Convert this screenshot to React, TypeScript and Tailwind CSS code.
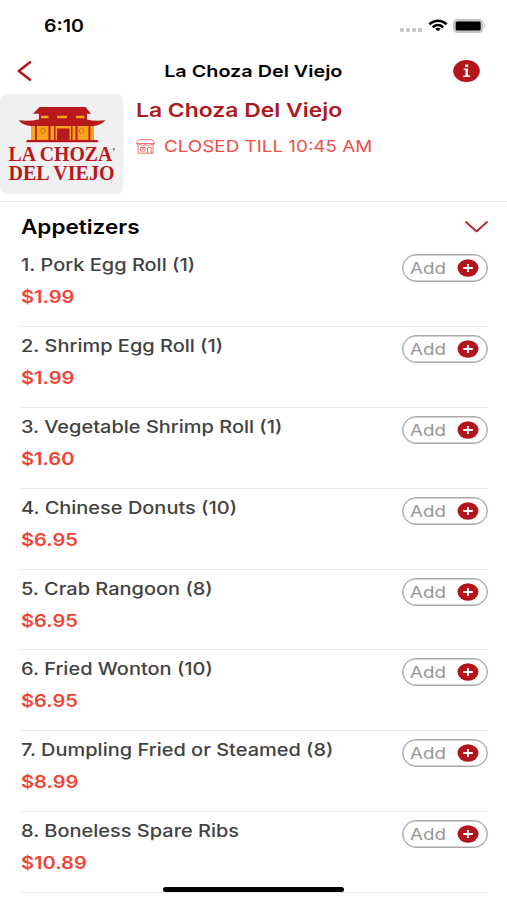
const items = [
  { id: 1, name: "Pork Egg Roll (1)", price: "$1.99" },
  { id: 2, name: "Shrimp Egg Roll (1)", price: "$1.99" },
  { id: 3, name: "Vegetable Shrimp Roll (1)", price: "$1.60" },
  { id: 4, name: "Chinese Donuts (10)", price: "$6.95" },
  { id: 5, name: "Crab Rangoon (8)", price: "$6.95" },
  { id: 6, name: "Fried Wonton (10)", price: "$6.95" },
  { id: 7, name: "Dumpling Fried or Steamed (8)", price: "$8.99" },
  { id: 8, name: "Boneless Spare Ribs", price: "$10.89" },
];

function StatusBar() {
  return (
    <div className="h-[50px] pl-[44px] pr-[20px] pt-[14px] flex justify-between items-start">
      <span className="text-[17px] leading-6 font-semibold origin-left scale-x-[1.15] whitespace-nowrap">
        6:10
      </span>

      <svg width="88" height="24" viewBox="0 0 88 24">
        <g fill="#c9c9c9">
          <rect x="1" y="14" width="4" height="4" rx="1" />
          <rect x="7" y="14" width="4" height="4" rx="1" />
          <rect x="13" y="14" width="4" height="4" rx="1" />
          <rect x="19" y="14" width="4" height="4" rx="1" />
        </g>
        <g transform="translate(29.5 5.5)" fill="none" stroke="#000" strokeWidth="2.5">
          <path d="M.8 4.7Q9.5 -2.2 18.2 4.7" />
          <path d="M4.2 7.7Q9.5 3.4 14.8 7.7" />
          <path d="M6.8 9.2Q9.5 7.4 12.2 9.2L9.5 11.8Z" fill="#000" stroke="none" />
        </g>
        <rect x="54.9" y="5.9" width="28.6" height="12.2" rx="3.6" fill="#ccc" stroke="#c4c4c4" strokeWidth="1.8" />
        <rect x="56.7" y="7.4" width="25" height="9.2" rx="1.5" />
        <path d="M85.3 9.8Q87.6 12 85.3 14.2Z" fill="#bdbdbd" />
      </svg>
    </div>
  );
}

function NavBar() {
  return (
    <div className="h-[44px] pl-[17px] pr-[27px] pb-[2px] flex justify-between items-center">
      <svg width="15" height="20" viewBox="0 0 15 20" fill="none" stroke="#b8141b" strokeWidth="2.5" strokeLinecap="round" strokeLinejoin="round">
        <path d="M13 1.2L1.8 10L13 18.8" />
      </svg>

      <h1 className="text-[16.5px] leading-6 font-semibold scale-x-[1.2] whitespace-nowrap ml-[22px]">
        La Choza Del Viejo
      </h1>

      <svg width="27" height="22" viewBox="0 0 27 22">
        <ellipse cx="13.5" cy="11" rx="13.3" ry="10.9" fill="#b8141b" />
        <g fill="#fff">
          <rect x="12" y="4.5" width="3.2" height="2.4" />
          <path d="M10.7 8.5H15V15.4H17V17H10.2V15.4H12.5V10H10.7Z" />
        </g>
      </svg>
    </div>
  );
}

function Logo() {
  return (
    <svg width="124" height="100" viewBox="0 0 124 100" className="shrink-0">
      <rect width="123.5" height="100" rx="7" fill="#f0f0f0" />
      {/* temple */}
      <path d="M39.500 13H85.500L91 19.800H33Z" fill="#b8191d" />
      <path d="M39 19H87V27H39Z" fill="#b8191d" />
      <path d="M41 21.700H48.500V24.200H41ZM57 21.700H67V24.200H57ZM76 21.700H84.500V24.200H76Z" fill="#fba31c" />
      <path d="M31 30H94V46.500H31Z" fill="#fba31c" />
      <path d="M38 25.500H87Q95 27.500 105.500 26.300Q101 31.500 93 32H31Q23 31.500 18.500 26.300Q30 27.500 38 25.500Z" fill="#b8191d" />
      <g fill="#b8191d">
        <rect x="35" y="31" width="1.800" height="16" />
        <rect x="48.500" y="31" width="2" height="16" />
        <rect x="54" y="31" width="1.500" height="16" />
        <rect x="57" y="34.500" width="12.500" height="13" />
        <rect x="71" y="31" width="1.500" height="16" />
        <rect x="75.500" y="31" width="2" height="16" />
        <rect x="88.500" y="31" width="1.800" height="16" />
        <path d="M27 46H97.500L98.500 48.200H26Z" />
      </g>
      <g fill="none" stroke="#b96c14" strokeWidth="0.9">
        <path d="M41 35.500L43 34L45 35.500V38L43 40L41 38Z" />
        <path d="M79.500 35.500L81.500 34L83.500 35.500V38L81.500 40L79.500 38Z" />
      </g>
      <g fill="#b8191d" fontFamily="Liberation Serif, serif" fontWeight="700" fontSize="21">
        <text x="8.500" y="67.300" textLength="107" lengthAdjust="spacingAndGlyphs">
          LA CHOZA<tspan fontSize="12" dy="-5">'</tspan>
        </text>
        <text x="8.500" y="86.200" textLength="106" lengthAdjust="spacingAndGlyphs">DEL VIEJO</text>
      </g>
    </svg>
  );
}

function StoreIcon() {
  return (
    <svg width="19" height="15" viewBox="0 0 19 15" fill="none" stroke="#f0625c" strokeWidth="0.9">
      <path d="M3.500 .6H15.500Q18.300 1.500 18.300 4.500H.7Q.7 1.500 3.500 .6Z" />
      <path d="M.7 4.500Q1.500 7 4.200 5.500Q6.800 7.500 9.500 5.500Q12.200 7.500 14.800 5.500Q17.500 7 18.300 4.500" />
      <path d="M2 6.500V14.200H17V6.500M11.500 14V8.500H15.200V14" />
      <path d="M4.500 8.500H9V12H4.500ZM5.500 11L8 9" />
    </svg>
  );
}

function AddButton() {
  return (
    <button className="w-[86px] h-[28px] rounded-full border border-[#a8a8a8] shadow-[inset_0_0_0_0.5px_#a8a8a8] bg-white pl-[7px] pr-[8px] flex justify-between items-center">
      <span className="text-[16px] text-[#969696] origin-left scale-x-[1.17]">
        Add
      </span>
      <svg width="22" height="18" viewBox="0 0 22 18">
        <ellipse cx="11" cy="9" rx="10.500" ry="8.800" fill="#b2151c" />
        <path d="M6.200 9H15.800M11 5V13" stroke="#fff" strokeWidth="1.900" />
      </svg>
    </button>
  );
}

export default function App() {
  return (
    <div className="relative w-[507px] h-[900px] overflow-hidden bg-white text-black font-['Inter',sans-serif]">
      <StatusBar />
      <NavBar />

      <div className="h-[108px] flex border-b-[1.5px] border-[#e6e6e6]">
        <Logo />
        <div className="pl-[12px] pt-[5px]">
          <h2 className="text-[19px] leading-6 font-semibold text-[#ad1a21] origin-left scale-x-[1.205] whitespace-nowrap">
            La Choza Del Viejo
          </h2>
          <div className="flex items-center gap-[9px] mt-[11px]">
            <StoreIcon />
            <span className="text-[16px] leading-6 text-[#f04e47] origin-left scale-x-[1.177] whitespace-nowrap">
              CLOSED TILL 10:45 AM
            </span>
          </div>
        </div>
      </div>

      <div className="pl-[21px] pr-[19px]">
        <div className="h-[44.2px] flex justify-between items-center pt-[5px]">
          <h3 className="text-[20px] font-semibold origin-left scale-x-[1.125]">
            Appetizers
          </h3>
          <svg width="23" height="12" viewBox="0 0 23 12" fill="none" stroke="#b8242b" strokeWidth="1.800" strokeLinecap="round" strokeLinejoin="round">
            <path d="M1 1L11.500 10.500L22 1" />
          </svg>
        </div>

        {items.map((item) => (
          <div
            key={item.id}
            className="h-[80.86px] flex justify-between items-start border-b-[1.5px] border-[#e6e6e6]"
          >
            <div className="pt-[7px]">
              <div className="text-[17px] leading-6 font-medium text-[#424242] origin-left scale-x-[1.175] whitespace-nowrap">
                {item.id}. {item.name}
              </div>
              <div className="mt-[8px] text-[17px] leading-6 font-semibold text-[#f44336] origin-left scale-x-[1.18]">
                {item.price}
              </div>
            </div>
            <div className="pt-[8px]">
              <AddButton />
            </div>
          </div>
        ))}
      </div>

      {/* home indicator */}
      <div className="absolute left-[163px] top-[887px] w-[181px] h-[5px] rounded-full bg-black" />
    </div>
  );
}
